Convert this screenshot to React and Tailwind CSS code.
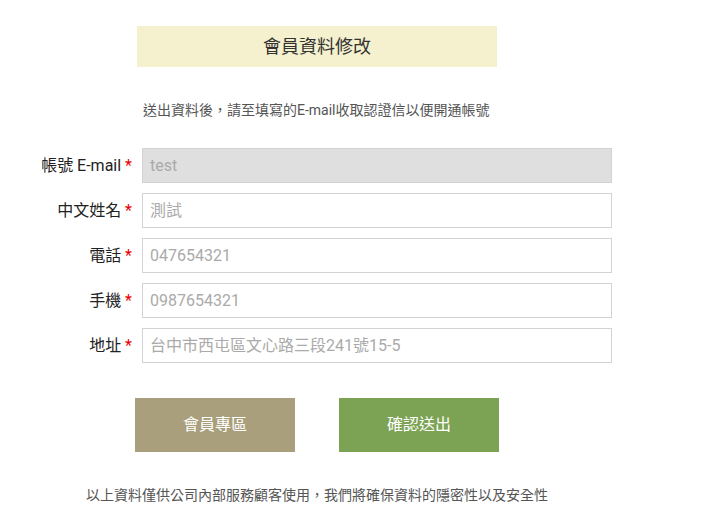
import React from "react";

const fields = [
  { label: "帳號 E-mail", value: "test", disabled: true },
  { label: "中文姓名", value: "測試" },
  { label: "電話", value: "047654321" },
  { label: "手機", value: "0987654321" },
  { label: "地址", value: "台中市西屯區文心路三段241號15-5" },
];

export default function App() {
  return (
    <div
      className="w-[721px] h-[524px] bg-white text-[#333]"
      style={{ fontFamily: '"Roboto", "Noto Sans CJK TC", sans-serif' }}
    >
      <div className="pt-[26px] pl-[137px]">
        <div className="w-[360px] h-[41px] bg-[#f5f0cd] flex items-center justify-center text-[18px] text-[#333]">
          會員資料修改
        </div>
      </div>

      <p className="mt-[33px] pl-[143px] text-[14px] leading-[20px] text-[#555]">
        送出資料後，請至填寫的E-mail收取認證信以便開通帳號
      </p>

      <form className="mt-[28px] flex flex-col gap-[10px]">
        {fields.map((f) => (
          <div key={f.label} className="flex items-center">
            <label className="w-[132px] text-right text-[16px] text-[#222]">
              {f.label} <span className="text-[#e00]">*</span>
            </label>
            <input
              defaultValue=""
              placeholder={f.value}
              disabled={f.disabled}
              className={
                "ml-[10px] w-[470px] h-[35px] border border-[#d3d3d3] px-[7px] text-[16px] outline-none placeholder:text-[#aaa] " +
                (f.disabled ? "bg-[#dfdfdf]" : "bg-white")
              }
            />
          </div>
        ))}
      </form>

      <div className="mt-[35px] pl-[135px] flex gap-[44px]">
        <button className="w-[160px] h-[54px] bg-[#a99f7c] text-white text-[16px]">
          會員專區
        </button>
        <button className="w-[160px] h-[54px] bg-[#7ba353] text-white text-[16px]">
          確認送出
        </button>
      </div>

      <p className="mt-[33px] pl-[86px] text-[14px] leading-[20px] text-[#555]">
        以上資料僅供公司內部服務顧客使用，我們將確保資料的隱密性以及安全性
      </p>
    </div>
  );
}
